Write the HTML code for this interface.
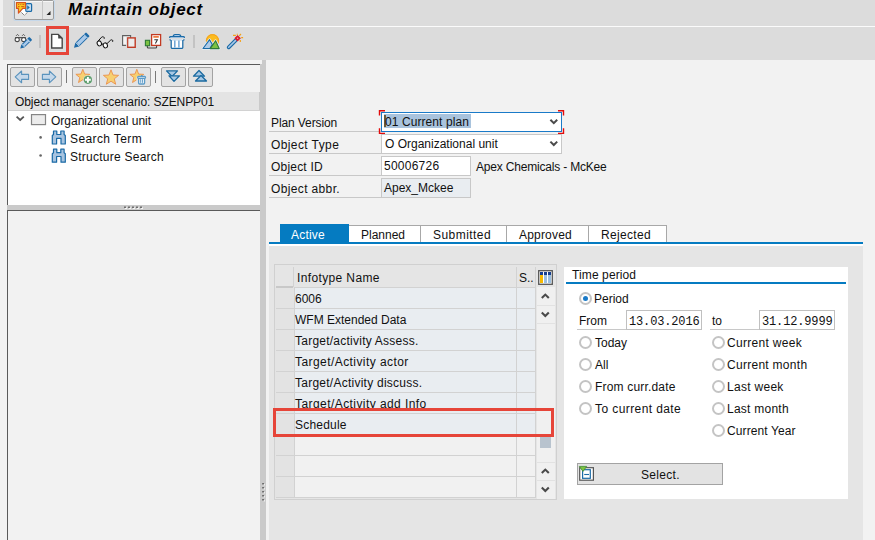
<!DOCTYPE html>
<html><head><meta charset="utf-8">
<style>
*{box-sizing:border-box;margin:0;padding:0}
html,body{width:875px;height:540px;overflow:hidden;background:#f2f2f2;font-family:"Liberation Sans",sans-serif;font-size:12px;color:#000}
.a{position:absolute}
.t{position:absolute;white-space:nowrap;line-height:1;font-size:12px;color:#111}
svg{position:absolute;overflow:visible}
.btn{position:absolute;width:25px;height:20px;background:#e3e3e3;border:1px solid #a3a3a3;border-radius:2px}
.rad{position:absolute;width:13px;height:13px;border-radius:50%;border:2px solid #c4c4c4;background:#fff}
</style></head><body>
<div class="a" style="left:0;top:0;width:875px;height:60px;background:#dcdcdc"></div>
<div class="a" style="left:0;top:0;width:3px;height:60px;background:#f0f0f0"></div>
<div class="a" style="left:3px;top:26px;width:872px;height:1px;background:#fbfbfb"></div>
<div class="a" style="left:13px;top:-1px;width:42px;height:22px;border:1px solid #c6d8ea;border-radius:2px"></div>
<div class="a" style="left:14px;top:0px;width:40px;height:20px;background:#e4e4e4;border:1px solid #9c9c9c;border-radius:2px"></div>
<div class="a" style="left:15px;top:1px;width:38px;height:1px;background:#f6f6f6"></div>
<div class="a" style="left:42px;top:0;width:1px;height:19px;background:#c4c4c4"></div>
<svg style="left:0;top:0" width="60" height="22">
 <path d="M46.5 15 L50.5 15 L50.5 11 Z" fill="#222"/>
 <path d="M20.5 11.5 L24.3 15.3 L28.5 11.2" fill="#fff" stroke="#444" stroke-width="0.9" stroke-dasharray="1.2 0.8"/>
 <path d="M21 11.2 L24.4 8 L28 11 L24.3 14.6 Z" fill="#fff"/>
 <rect x="25.8" y="3.6" width="5.8" height="7.8" rx="1" fill="#c7dcef" stroke="#1a6aa6" stroke-width="1.2"/>
 <path d="M27.2 5.3 L29.8 7.5 L27.2 9.7 Z" fill="#1a6aa6"/>
 <path d="M16.5 2.6 H25.5 V8.4 H22.8 L18.4 13.2 V8.4 H16.5 Z" fill="#f9c81e" stroke="#d9531e" stroke-width="1.1" stroke-linejoin="round"/>
 <path d="M18 4.4 H19.2 M20.3 4.4 H21.3 M22.4 4.4 H24.3 M18 6.6 H19.6 M21.2 6.6 H24.3" stroke="#d9531e" stroke-width="1"/>
</svg>
<div class="t" style="left:68px;top:1px;font-size:17px;font-weight:bold;font-style:italic;letter-spacing:0.75px;color:#000">Maintain object</div>
<div class="a" style="left:39px;top:35px;width:2px;height:13px;background:#c3c3c3"></div>
<div class="a" style="left:193px;top:35px;width:2px;height:13px;background:#c3c3c3"></div>
<div class="a" style="left:49px;top:29px;width:17px;height:23px;border:1px solid #d3e2e8"></div>
<div class="a" style="left:46px;top:26px;width:23px;height:29px;border:3px solid #e64539"></div>
<svg style="left:0;top:0" width="260" height="60">
 <!-- glasses + pencil -->
 <g fill="#fff" stroke="#4a4a4a" stroke-width="1.05">
  <circle cx="17.2" cy="39.5" r="2.1"/>
  <circle cx="23.7" cy="39.5" r="2.1"/>
  <path d="M15.1 37.6 H25.8" fill="none"/>
 </g>
 <path d="M16.1 35.8 L17.5 34.4 L18.9 35.8 M22.1 35.8 L23.5 34.4 L24.9 35.8" fill="none" stroke="#555" stroke-width="1"/>
<g transform="translate(20.3 48.5) rotate(-44.17)">
 <path d="M0 0 L3.6 -2.2 L13.638647478507025 -2.2 Q14.638647478507025 -2.2 14.638647478507025 -1.2000000000000002 L14.638647478507025 1.2000000000000002 Q14.638647478507025 2.2 13.638647478507025 2.2 L3.6 2.2 Z" fill="#1e6aa8"/>
 <rect x="4.6" y="-1.2500000000000002" width="6.638647478507025" height="2.5000000000000004" fill="#a9c9ea"/>
 <path d="M4.1 -2.2 V2.2 M11.638647478507025 -2.2 V2.2" stroke="#fff" stroke-width="0.9" opacity="0.85"/>
</g>
 <!-- new doc -->
 <path d="M51.7 34.4 H58.2 L62.2 38.4 V48 H51.7 Z" fill="#fff" stroke="#474747" stroke-width="1.4"/>
 <path d="M58.2 34.4 L62.2 38.4 H58.2 Z" fill="#474747"/>
<g transform="translate(74 47.8) rotate(-44.37)">
 <path d="M0 0 L4.5 -2.7 L18.44659353203023 -2.7 Q19.44659353203023 -2.7 19.44659353203023 -1.7000000000000002 L19.44659353203023 1.7000000000000002 Q19.44659353203023 2.7 18.44659353203023 2.7 L4.5 2.7 Z" fill="#1e6aa8"/>
 <rect x="5.5" y="-1.7500000000000002" width="10.546593532030231" height="3.5000000000000004" fill="#a9c9ea"/>
 <path d="M5.0 -2.7 V2.7 M16.44659353203023 -2.7 V2.7" stroke="#fff" stroke-width="0.9" opacity="0.85"/>
</g>
 <!-- glasses -->
 <g fill="#fff" stroke="#111" stroke-width="1.0">
  <ellipse cx="99.3" cy="43.4" rx="2.1" ry="2.5" transform="rotate(-25 99.3 43.4)"/>
  <ellipse cx="105.3" cy="45.4" rx="2.1" ry="2.5" transform="rotate(-25 105.3 45.4)"/>
  <path d="M101.2 43.6 L103.5 44.5" fill="none"/>
  <path d="M97.6 41.6 L101.6 37.2 C103 36 104.8 37.2 104.2 38.8" fill="none"/>
  <path d="M107 43.6 L110.6 40.2 C111.8 39.2 113.5 40.3 112.6 41.8" fill="none"/>
 </g>
 <!-- copy -->
 <path d="M122.6 35.6 H130.6 V45.4 H122.6 Z" fill="#f4f4f4" stroke="#606060" stroke-width="1.1"/>
 <rect x="127.6" y="37.9" width="7.6" height="9.4" fill="#ececec" stroke="#c03a24" stroke-width="1.4"/>
 <path d="M126.6 36.9 V48" stroke="#dcdcdc" stroke-width="1"/>
 <!-- delimit -->
 <path d="M147.3 45.8 V47 Q147.3 48 148.3 48 H155.6 Q156.6 48 156.6 47 V45.8" fill="none" stroke="#444" stroke-width="1.1"/>
 <rect x="145.4" y="40.3" width="4.2" height="5.4" fill="#7cc242" stroke="#2f7a36" stroke-width="1.1"/>
 <rect x="151.6" y="34.6" width="9" height="10.8" fill="#fff" stroke="#c23a22" stroke-width="1.3"/>
 <path d="M153.3 36.9 H158.8" stroke="#e8590c" stroke-width="1.4"/>
 <path d="M154.3 39.8 H157.4 L155.4 43.6" fill="none" stroke="#333" stroke-width="1.1"/>
 <!-- trash -->
 <path d="M173.2 36.6 C173.2 34.9 174 34.5 175.2 34.5 H178.8 C180 34.5 180.8 34.9 180.8 36.6 Z" fill="#a9c8e8" stroke="#1a6aa6" stroke-width="1.2"/>
 <path d="M169.7 37.9 V37.3 Q169.7 36.6 170.5 36.6 H183.5 Q184.3 36.6 184.3 37.3 V37.9" fill="#c5daf0" stroke="#1a6aa6" stroke-width="1.2"/>
 <path d="M169.8 39.4 Q169.9 40.3 171.2 40.5 V47.4 Q171.2 48.4 172.4 48.4 H181.6 Q182.8 48.4 182.8 47.4 V40.5 Q184.1 40.3 184.2 39.4" fill="#fff" stroke="#1a6aa6" stroke-width="1.25"/>
 <path d="M171.8 40 H182.2" stroke="#b8d2ea" stroke-width="1"/>
 <path d="M174.8 40.6 V47.4 M178.9 40.6 V47.4" stroke="#6fa6d6" stroke-width="1.5"/>
 <!-- mountain -->
 <circle cx="212.5" cy="40.7" r="6.6" fill="#fcbc1f"/>
 <circle cx="212.5" cy="40.7" r="6.1" fill="none" stroke="#f5a01e" stroke-width="1"/>
 <path d="M203 48.5 L209.6 39.7 L212.3 44.6 L209.8 48.5 Z" fill="#b0cce8" stroke="#e8eef2" stroke-width="2.6" stroke-linejoin="round"/>
 <path d="M210.2 48.6 L215.6 40.7 L219.2 48.6 Z" fill="#7cc242" stroke="#e8eef2" stroke-width="2.6" stroke-linejoin="round"/>
 <path d="M203 48.5 L209.6 39.7 L212.3 44.6 L209.8 48.5 Z" fill="#b0cce8" stroke="#1a6aa6" stroke-width="1.1" stroke-linejoin="round"/>
 <path d="M210.2 48.6 L215.6 40.7 L219.2 48.6 Z" fill="#7cc242" stroke="#2f7a36" stroke-width="1.1" stroke-linejoin="round"/>
 <!-- wand -->
 <path d="M228.7 47.3 L235.6 40.4" stroke="#1a6aa6" stroke-width="3.8" stroke-linecap="round"/>
 <path d="M228.7 47.3 L235.6 40.4" stroke="#a9c8e8" stroke-width="1.5" stroke-linecap="round"/>
 <rect x="235.3" y="36" width="4.6" height="4.6" fill="#d9182a" transform="rotate(45 237.6 38.3)"/>
 <circle cx="237.6" cy="38.3" r="0.8" fill="#f0a0a0"/>
 <path d="M233 35.4 H235.9 M237.3 33.8 V34.8 M239.2 35.8 L241 34 M241.2 37.7 H243.1 M240.3 40 V41.9" stroke="#f5a016" stroke-width="1.2"/>
</svg>
<div class="a" style="left:7px;top:64px;width:254px;height:142px;background:#fff;border-left:1px solid #5a5a5a;border-top:1px solid #5a5a5a"></div>
<div class="a" style="left:8px;top:65px;width:252px;height:27px;background:#f2f2f2"></div>
<div class="a" style="left:8px;top:92px;width:251px;height:18px;background:#e4e4e4"></div>
<div class="a" style="left:8px;top:110px;width:252px;height:1px;background:#d2d2d2"></div>
<div class="a" style="left:259px;top:92px;width:1px;height:18px;background:#cacaca"></div>
<div class="t" style="left:15px;top:96px;letter-spacing:-0.09px">Object manager scenario: SZENPP01</div>
<div class="a" style="left:7px;top:205px;width:255px;height:5px;background:#cacaca"></div>
<div class="a" style="left:7px;top:210px;width:254px;height:330px;background:#f2f2f2;border-left:1px solid #5a5a5a;border-top:1px solid #5a5a5a"></div>
<div class="a" style="left:260px;top:64px;width:6px;height:476px;background:#cacaca"></div>
<div class="a" style="left:262px;top:60px;width:4px;height:4px;background:#cacaca"></div>
<svg style="left:0;top:0" width="270" height="540">
 <g fill="#fff"><rect x="125" y="207.6" width="2" height="1.2"/><rect x="129" y="207.6" width="2" height="1.2"/><rect x="133" y="207.6" width="2" height="1.2"/><rect x="137" y="207.6" width="2" height="1.2"/><rect x="141" y="207.6" width="2" height="1.2"/></g>
 <g fill="#555"><rect x="124" y="206.6" width="2" height="1.2"/><rect x="128" y="206.6" width="2" height="1.2"/><rect x="132" y="206.6" width="2" height="1.2"/><rect x="136" y="206.6" width="2" height="1.2"/><rect x="140" y="206.6" width="2" height="1.2"/></g>
 <g fill="#555"><rect x="262.3" y="483" width="1.5" height="1.5"/><rect x="262.3" y="487" width="1.5" height="1.5"/><rect x="262.3" y="491" width="1.5" height="1.5"/><rect x="262.3" y="495" width="1.5" height="1.5"/><rect x="262.3" y="499" width="1.5" height="1.5"/></g>
 <g fill="#fff"><rect x="263.8" y="484.2" width="1" height="1.2"/><rect x="263.8" y="488.2" width="1" height="1.2"/><rect x="263.8" y="492.2" width="1" height="1.2"/><rect x="263.8" y="496.2" width="1" height="1.2"/><rect x="263.8" y="500.2" width="1" height="1.2"/></g>
</svg>
<div class="btn" style="left:10px;top:67px"></div>
<div class="btn" style="left:37px;top:67px"></div>
<div class="btn" style="left:72px;top:67px"></div>
<div class="btn" style="left:99px;top:67px"></div>
<div class="btn" style="left:126px;top:67px"></div>
<div class="btn" style="left:161px;top:67px"></div>
<div class="btn" style="left:188px;top:67px"></div>
<div class="a" style="left:66px;top:70px;width:1px;height:13px;background:#7a7a7a"></div>
<div class="a" style="left:155px;top:71px;width:1px;height:12px;background:#7a7a7a"></div>
<svg style="left:0;top:0" width="260" height="100">
 <path d="M15.2 76.9 L21.6 71 V74.4 H28.6 V79.4 H21.6 V82.8 Z" fill="#c5d8ea" stroke="#5a93bd" stroke-width="1.1" stroke-linejoin="round"/>
 <path d="M55.8 76.9 L49.4 71 V74.4 H42.4 V79.4 H49.4 V82.8 Z" fill="#c5d8ea" stroke="#5a93bd" stroke-width="1.1" stroke-linejoin="round"/>
 <path d="M82.80 69.30 L84.65 74.06 L89.74 74.34 L85.79 77.57 L87.09 82.51 L82.80 79.74 L78.51 82.51 L79.81 77.57 L75.86 74.34 L80.95 74.06 Z" fill="#f7d070" stroke="#ea914e" stroke-width="0.9" stroke-linejoin="round"/>
 <circle cx="87.9" cy="79.8" r="4.6" fill="#e3e3e3"/>
 <circle cx="87.9" cy="79.8" r="4.1" fill="#5e9e6e"/>
 <path d="M87.9 76.9 V82.7 M85 79.8 H90.8" stroke="#fff" stroke-width="1.9"/>
 <path d="M111.00 69.80 L113.02 75.02 L118.61 75.33 L114.27 78.86 L115.70 84.27 L111.00 81.24 L106.30 84.27 L107.73 78.86 L103.39 75.33 L108.98 75.02 Z" fill="#f7d070" stroke="#ea914e" stroke-width="0.9" stroke-linejoin="round"/>
 <path d="M136.80 69.30 L138.65 74.06 L143.74 74.34 L139.79 77.57 L141.09 82.51 L136.80 79.74 L132.51 82.51 L133.81 77.57 L129.86 74.34 L134.95 74.06 Z" fill="#f7d070" stroke="#ea914e" stroke-width="0.9" stroke-linejoin="round"/>
 <path d="M136.5 76.5 H147 V84.8 H136.5 Z" fill="#e3e3e3"/>
 <path d="M138.6 78.3 V83 Q138.6 84 139.6 84 H143.6 Q144.6 84 144.6 83 V78.3" fill="#eef3f8" stroke="#5b9bc8" stroke-width="1.3"/>
 <rect x="137.6" y="76.3" width="8" height="2" rx="1" fill="#d5e5f2" stroke="#5b9bc8" stroke-width="1.2"/>
 <path d="M140.7 79.2 V82.8 M142.5 79.2 V82.8" stroke="#5b9bc8" stroke-width="0.9"/>
 <path d="M141.6 75 V76" stroke="#5b9bc8" stroke-width="1.2"/>
 <path d="M166.5 70.9 H177.5 L172 76.5 Z" fill="#a8c8e4" stroke="#1a6aa0" stroke-width="1.3" stroke-linejoin="round"/>
 <path d="M169 75.8 H179.5 L174 81.4 Z" fill="#a8c8e4" stroke="#1a6aa0" stroke-width="1.3" stroke-linejoin="round"/>
 <path d="M193.5 76.2 H204.5 L199 70.5 Z" fill="#a8c8e4" stroke="#1a6aa0" stroke-width="1.3" stroke-linejoin="round"/>
 <path d="M195.5 81 H206.5 L201 75.5 Z" fill="#a8c8e4" stroke="#1a6aa0" stroke-width="1.3" stroke-linejoin="round"/>
</svg>
<svg style="left:0;top:0" width="260" height="200">
 <path d="M16.6 116.6 L20.2 120 L23.8 116.6" fill="none" stroke="#555" stroke-width="1.8"/>
 <rect x="31.5" y="114.6" width="14" height="10" fill="#ececec" stroke="#858585" stroke-width="1.2"/>
 <circle cx="40.6" cy="137.4" r="1.3" fill="#666"/>
 <circle cx="40.6" cy="155.5" r="1.3" fill="#666"/>
 <path d="M52.3 144 V135.5 L53.5 134.5 V131 H56.8 V134.5 H60.8 V131 H64.1 V134.5 L65.3 135.5 V144 H61 V138.3 H56.6 V144 Z" fill="#a8c4e0" stroke="#1a6aa6" stroke-width="1.2" stroke-linejoin="round"/>
 <path d="M52.3 162.2 V153.7 L53.5 152.7 V149.2 H56.8 V152.7 H60.8 V149.2 H64.1 V152.7 L65.3 153.7 V162.2 H61 V156.5 H56.6 V162.2 Z" fill="#a8c4e0" stroke="#1a6aa6" stroke-width="1.2" stroke-linejoin="round"/>
</svg>
<div class="t" style="left:51px;top:115px">Organizational unit</div>
<div class="t" style="left:70px;top:133px;letter-spacing:0.39px">Search Term</div>
<div class="t" style="left:70px;top:151px;letter-spacing:0.25px">Structure Search</div>
<div class="a" style="left:269px;top:131px;width:112px;height:1px;background:#c8c8c8"></div>
<div class="a" style="left:269px;top:153px;width:112px;height:1px;background:#c8c8c8"></div>
<div class="a" style="left:269px;top:175px;width:112px;height:1px;background:#c8c8c8"></div>
<div class="a" style="left:269px;top:197px;width:112px;height:1px;background:#c8c8c8"></div>
<div class="t" style="left:271px;top:117px;letter-spacing:-0.1px">Plan Version</div>
<div class="t" style="left:271px;top:139px;letter-spacing:0.4px">Object Type</div>
<div class="t" style="left:271px;top:161px;letter-spacing:0.2px">Object ID</div>
<div class="t" style="left:271px;top:183px;letter-spacing:0.36px">Object abbr.</div>
<div class="a" style="left:381px;top:112px;width:181px;height:20px;background:#fff;border:1px solid #1a7ac8"></div>
<div class="a" style="left:381px;top:134px;width:181px;height:20px;background:#fff;border:1px solid #c8c8c8"></div>
<div class="a" style="left:381px;top:156px;width:90px;height:20px;background:#fff;border:1px solid #c8c8c8"></div>
<div class="a" style="left:381px;top:178px;width:90px;height:20px;background:#e9edf1;border:1px solid #c8c8c8"></div>
<div class="a" style="left:384px;top:114px;width:87px;height:14px;background:#a9c3dd"></div>
<div class="a" style="left:384px;top:115px;width:2px;height:12px;background:#6b5a3a"></div>
<svg style="left:0;top:0" width="600" height="200">
 <path d="M385 110.8 H379.5 V115.5 M379.5 128.3 V133.4 H385 M558 110.8 H563.5 V115.5 M563.5 128.3 V133.4 H558" fill="none" stroke="#e30b0b" stroke-width="1.4"/>
 <path d="M550.4 119.8 L553.8 123.2 L557.2 119.8" fill="none" stroke="#4a4a4a" stroke-width="2"/>
 <path d="M550.4 141.6 L553.8 145 L557.2 141.6" fill="none" stroke="#4a4a4a" stroke-width="2"/>
</svg>
<div class="t" style="left:385px;top:116px;letter-spacing:0.08px">01 Current plan</div>
<div class="t" style="left:385px;top:138px">O Organizational unit</div>
<div class="t" style="left:384px;top:160px;letter-spacing:0.25px">50006726</div>
<div class="t" style="left:384px;top:182px">Apex_Mckee</div>
<div class="t" style="left:476px;top:161px;letter-spacing:-0.19px">Apex Chemicals - McKee</div>
<div class="a" style="left:269px;top:242px;width:594px;height:2px;background:#057bc1"></div>
<div class="a" style="left:269px;top:244px;width:594px;height:2px;background:#fff"></div>
<div class="a" style="left:269px;top:246px;width:594px;height:294px;background:#e5e5e5"></div>
<div class="a" style="left:280px;top:224px;width:69px;height:18px;background:#057bc1"></div>
<div class="a" style="left:349px;top:225px;width:318px;height:17px;background:#fff;border:1px solid #a8a8a8;border-bottom:none;border-left:none"></div>
<div class="a" style="left:420px;top:225px;width:1px;height:17px;background:#a8a8a8"></div>
<div class="a" style="left:506px;top:225px;width:1px;height:17px;background:#a8a8a8"></div>
<div class="a" style="left:588px;top:225px;width:1px;height:17px;background:#a8a8a8"></div>
<div class="t" style="left:291px;top:229px;color:#fff;letter-spacing:0.2px">Active</div>
<div class="t" style="left:361px;top:229px;letter-spacing:0.0px">Planned</div>
<div class="t" style="left:433px;top:229px;letter-spacing:0.45px">Submitted</div>
<div class="t" style="left:519px;top:229px;letter-spacing:0.19px">Approved</div>
<div class="t" style="left:601px;top:229px;letter-spacing:0.32px">Rejected</div>
<div class="a" style="left:274px;top:264px;width:283px;height:236px;background:#e5e5e5;border:1px solid #d0d0d0"></div>
<div class="a" style="left:275px;top:287px;width:19px;height:211px;background:#e3e3e3"></div>
<div class="a" style="left:295px;top:288px;width:240px;height:146px;background:#e9edf1"></div>
<div class="a" style="left:295px;top:434px;width:240px;height:63px;background:#f1f1f1"></div>
<div class="a" style="left:537px;top:287px;width:18px;height:212px;background:#f0f0f0"></div>
<div class="a" style="left:293px;top:267px;width:1px;height:20px;background:#d2d2d2"></div>
<div class="a" style="left:294px;top:287px;width:1px;height:211px;background:#d2d2d2"></div>
<div class="a" style="left:516px;top:267px;width:1px;height:231px;background:#d2d2d2"></div>
<div class="a" style="left:535px;top:267px;width:1px;height:231px;background:#d2d2d2"></div>
<div class="a" style="left:276px;top:286px;width:17px;height:2px;background:#c8c8c8"></div>
<div class="a" style="left:295px;top:287px;width:241px;height:1px;background:#d2d2d2"></div>
<div class="a" style="left:276px;top:308px;width:259px;height:1px;background:#d2d2d2"></div>
<div class="a" style="left:276px;top:329px;width:259px;height:1px;background:#d2d2d2"></div>
<div class="a" style="left:276px;top:350px;width:259px;height:1px;background:#d2d2d2"></div>
<div class="a" style="left:276px;top:371px;width:259px;height:1px;background:#d2d2d2"></div>
<div class="a" style="left:276px;top:392px;width:259px;height:1px;background:#d2d2d2"></div>
<div class="a" style="left:276px;top:413px;width:259px;height:1px;background:#d2d2d2"></div>
<div class="a" style="left:276px;top:434px;width:259px;height:1px;background:#d2d2d2"></div>
<div class="a" style="left:276px;top:455px;width:259px;height:1px;background:#d2d2d2"></div>
<div class="a" style="left:276px;top:476px;width:259px;height:1px;background:#d2d2d2"></div>
<div class="a" style="left:276px;top:497px;width:259px;height:1px;background:#d2d2d2"></div>
<div class="a" style="left:537px;top:305px;width:18px;height:1px;background:#e2e2e2"></div>
<div class="a" style="left:537px;top:323px;width:18px;height:1px;background:#e2e2e2"></div>
<div class="a" style="left:537px;top:462px;width:18px;height:1px;background:#e2e2e2"></div>
<div class="a" style="left:537px;top:480px;width:18px;height:1px;background:#e2e2e2"></div>
<div class="a" style="left:540px;top:437px;width:11px;height:11px;background:#b8c3ce"></div>
<svg style="left:0;top:0" width="600" height="540">
 <rect x="538.7" y="270.7" width="13.6" height="13.6" fill="#fff" stroke="#555" stroke-width="1.3"/>
 <rect x="540" y="272" width="3" height="11" fill="#f7b900"/>
 <rect x="544" y="272" width="3" height="11" fill="#9cc0e0"/>
 <rect x="548" y="272" width="3" height="11" fill="#9cc0e0"/>
 <rect x="540" y="272" width="3" height="3" fill="#173f8f"/>
 <rect x="544" y="272" width="3" height="3" fill="#173f8f"/>
 <rect x="548" y="272" width="3" height="3" fill="#173f8f"/>
 <g fill="none" stroke="#4a4a4a" stroke-width="2.1">
 <path d="M541.8 298 L545.3 294.6 L548.8 298"/>
 <path d="M541.8 312.6 L545.3 316 L548.8 312.6"/>
 <path d="M541.8 473 L545.3 469.6 L548.8 473"/>
 <path d="M541.8 487.6 L545.3 491 L548.8 487.6"/>
 </g>
</svg>
<div class="t" style="left:297px;top:272px;letter-spacing:0.37px">Infotype Name</div>
<div class="t" style="left:519px;top:272px">S..</div>
<div class="t" style="left:295px;top:293px">6006</div>
<div class="t" style="left:295px;top:314px">WFM Extended Data</div>
<div class="t" style="left:295px;top:335px;letter-spacing:0.24px">Target/activity Assess.</div>
<div class="t" style="left:295px;top:356px;letter-spacing:0.43px">Target/Activity actor</div>
<div class="t" style="left:295px;top:377px;letter-spacing:0.25px">Target/Activity discuss.</div>
<div class="t" style="left:295px;top:398px;letter-spacing:0.43px">Target/Activity add Info</div>
<div class="t" style="left:295px;top:419px;letter-spacing:0.2px">Schedule</div>
<div class="a" style="left:273px;top:408px;width:281px;height:29px;border:3px solid #e64539"></div>
<div class="a" style="left:564px;top:267px;width:284px;height:232px;background:#fff"></div>
<div class="t" style="left:572px;top:269px;letter-spacing:0.11px">Time period</div>
<div class="a" style="left:566px;top:282px;width:280px;height:2px;background:#057bc1"></div>
<div class="rad" style="left:579px;top:292px"></div>
<div class="a" style="left:583px;top:296px;width:5px;height:5px;border-radius:50%;background:#1a7ac8"></div>
<div class="t" style="left:594px;top:293px">Period</div>
<div class="a" style="left:577px;top:329px;width:49px;height:1px;background:#c8c8c8"></div>
<div class="a" style="left:710px;top:329px;width:49px;height:1px;background:#c8c8c8"></div>
<div class="t" style="left:579px;top:315px">From</div>
<div class="t" style="left:712px;top:315px">to</div>
<div class="a" style="left:626px;top:310px;width:76px;height:20px;background:#fff;border:1px solid #c0c0c0"></div>
<div class="a" style="left:759px;top:310px;width:76px;height:20px;background:#fff;border:1px solid #c0c0c0"></div>
<div class="t" style="left:629px;top:315.5px;font-family:'Liberation Mono',monospace;font-size:12px;letter-spacing:-0.15px">13.03.2016</div>
<div class="t" style="left:762px;top:315.5px;font-family:'Liberation Mono',monospace;font-size:12px;letter-spacing:-0.15px">31.12.9999</div>
<div class="rad" style="left:579px;top:336px"></div><div class="t" style="left:595px;top:337px">Today</div>
<div class="rad" style="left:579px;top:358px"></div><div class="t" style="left:595px;top:359px">All</div>
<div class="rad" style="left:579px;top:380px"></div><div class="t" style="left:595px;top:381px;letter-spacing:0.18px">From curr.date</div>
<div class="rad" style="left:579px;top:402px"></div><div class="t" style="left:595px;top:403px;letter-spacing:0.41px">To current date</div>
<div class="rad" style="left:712px;top:336px"></div><div class="t" style="left:727px;top:337px;letter-spacing:0.3px">Current week</div>
<div class="rad" style="left:712px;top:358px"></div><div class="t" style="left:727px;top:359px;letter-spacing:0.28px">Current month</div>
<div class="rad" style="left:712px;top:380px"></div><div class="t" style="left:727px;top:381px;letter-spacing:0.29px">Last week</div>
<div class="rad" style="left:712px;top:402px"></div><div class="t" style="left:727px;top:403px;letter-spacing:0.25px">Last month</div>
<div class="rad" style="left:712px;top:424px"></div><div class="t" style="left:727px;top:425px;letter-spacing:0.1px">Current Year</div>
<div class="a" style="left:577px;top:463px;width:146px;height:22px;background:#e3e3e3;border:1px solid #a3a3a3"></div>
<svg style="left:0;top:0" width="875" height="540">
 <rect x="579.7" y="467.7" width="13.7" height="12.5" fill="#fff" stroke="#555" stroke-width="1.2"/>
 <rect x="582.6" y="469.7" width="7.7" height="8.6" fill="#fff" stroke="#1a6aa6" stroke-width="1.2"/>
 <path d="M584.2 474.5 H589" stroke="#1a6aa6" stroke-width="1.1"/>
 <path d="M579.3 466.4 H586.7 L583 471.4 Z" fill="#7cc242" stroke="#3d8a2e" stroke-width="0.8" stroke-linejoin="round"/>
</svg>
<div class="t" style="left:641px;top:469px;letter-spacing:0.3px">Select.</div>
</body></html>
